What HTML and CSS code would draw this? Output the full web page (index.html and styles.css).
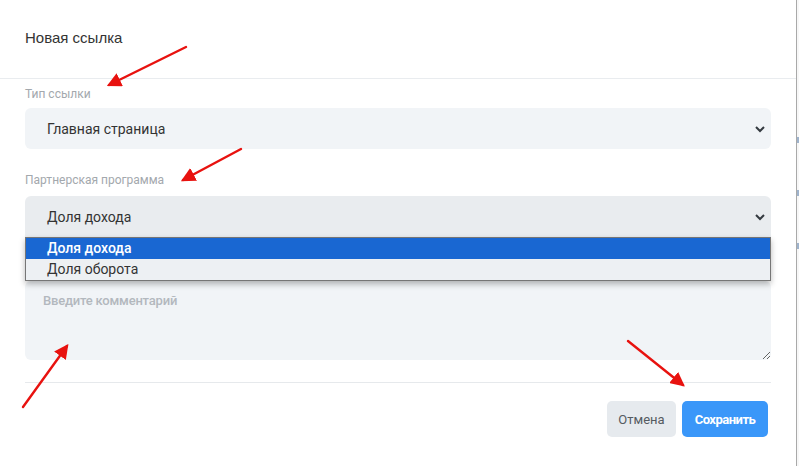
FILE: index.html
```html
<!DOCTYPE html>
<html lang="ru">
<head>
<meta charset="utf-8">
<title>Новая ссылка</title>
<link rel="stylesheet" href="styles.css">
</head>
<body>
<div class="modal">
  <div class="modal-header">Новая ссылка</div>
  <div class="modal-body">
    <div class="label">Тип ссылки</div>
    <div class="select">
      <span>Главная страница</span>
      <svg class="chev" width="10" height="7" viewBox="0 0 10 7"><polyline points="1,1 5,5 9,1" fill="none" stroke="#343a40" stroke-width="2"/></svg>
    </div>
    <div class="label label-2">Партнерская программа</div>
    <div class="select-wrap">
      <div class="select select-focus">
        <span>Доля дохода</span>
        <svg class="chev" width="10" height="7" viewBox="0 0 10 7"><polyline points="1,1 5,5 9,1" fill="none" stroke="#343a40" stroke-width="2"/></svg>
      </div>
      <div class="listbox">
        <div class="option option-active">Доля дохода</div>
        <div class="option">Доля оборота</div>
      </div>
    </div>
    <textarea class="comment" placeholder="Введите комментарий"></textarea>
    <div class="divider"></div>
    <div class="actions">
      <button class="btn btn-cancel">Отмена</button>
      <button class="btn btn-save">Сохранить</button>
    </div>
  </div>
  <svg class="arrows" width="799" height="466" viewBox="0 0 799 466">
    <defs>
      <marker id="ah" markerWidth="6" markerHeight="6" refX="5" refY="3" orient="auto" markerUnits="strokeWidth">
        <path d="M0,0 L6,3 L0,6 Z" fill="#e8120f"/>
      </marker>
    </defs>
    <g stroke="#e8120f" stroke-width="2.4" stroke-linecap="round" marker-end="url(#ah)">
      <line x1="186" y1="47" x2="109" y2="85"/>
      <line x1="241" y1="149" x2="183" y2="180"/>
      <line x1="23" y1="407" x2="67" y2="346"/>
      <line x1="628" y1="341" x2="683" y2="385"/>
    </g>
  </svg>
</div>
<div class="backdrop-edge">
  <span class="mark m1"></span>
  <span class="mark m2"></span>
  <span class="mark m3"></span>
</div>
</body>
</html>
```
FILE: styles.css
```css
html, body {
  margin: 0;
  padding: 0;
}
body {
  width: 799px;
  height: 466px;
  display: flex;
  background: #fbfbfb;
  font-family: Roboto, "Liberation Sans", Arial, sans-serif;
  overflow: hidden;
}
.modal {
  position: relative;
  width: 797px;
  height: 466px;
  background: #fff;
  border-right: 1px solid #a9a9a9;
  box-sizing: border-box;
  flex: none;
}
.backdrop-edge {
  position: relative;
  flex: 1;
  background: #f7f7f7;
}
.mark {
  position: absolute;
  left: 0;
  width: 2px;
  height: 6px;
  background: #9fb3cc;
}
.m1 { top: 137px; }
.m2 { top: 190px; }
.m3 { top: 243px; }
.modal-header {
  height: 79px;
  box-sizing: border-box;
  padding: 28px 25px 0;
  font-family: "Liberation Sans", Arial, sans-serif;
  font-size: 15px;
  line-height: 19px;
  color: #333;
  border-bottom: 1px solid #e9ecef;
}
.modal-body {
  padding: 0 25px 0 25px;
}
.label {
  margin-top: 8px;
  margin-bottom: 7px;
  font-size: 12px;
  line-height: 14px;
  color: #a3a8ad;
}
.label-2 {
  margin-top: 24px;
  margin-bottom: 9px;
}
.select {
  height: 41px;
  box-sizing: border-box;
  background: #f1f4f7;
  border-radius: 6px;
  padding: 0 6px 0 22px;
  display: flex;
  align-items: center;
  justify-content: space-between;
  font-size: 14px;
  color: #333;
}
.select-focus {
  background: #e9ecef;
  border-radius: 6px 6px 0 0;
}
.chev {
  display: block;
  margin-top: 1px;
}
.select-wrap {
  position: relative;
}
.listbox {
  position: absolute;
  left: 0;
  right: 0;
  top: 100%;
  z-index: 2;
  border: 1px solid #767676;
  background: #edf0f3;
  box-shadow: 0 3px 6px rgba(0, 0, 0, 0.28);
}
.option {
  height: 21px;
  line-height: 21px;
  padding-left: 21px;
  font-size: 14px;
  color: #333;
}
.option-active {
  background: #1967d2;
  color: #fff;
  font-weight: 500;
}
.comment {
  display: block;
  width: 100%;
  box-sizing: border-box;
  margin-top: 44px;
  height: 79px;
  border: none;
  border-radius: 6px;
  background: #f1f4f7;
  padding: 12px 18px;
  font-family: Roboto, "Liberation Sans", Arial, sans-serif;
  font-size: 13px;
  font-weight: 500;
  letter-spacing: -0.2px;
  color: #333;
  resize: vertical;
  outline: none;
}
.comment::placeholder {
  color: #b3b8be;
}
.divider {
  margin-top: 22px;
  border-top: 1px solid #e6e9ec;
}
.actions {
  display: flex;
  justify-content: flex-end;
  gap: 6px;
  padding: 18px 3px 0 0;
}
.btn {
  height: 36px;
  border: none;
  border-radius: 5px;
  font-family: Roboto, "Liberation Sans", Arial, sans-serif;
  font-size: 13px;
  padding: 0;
  cursor: pointer;
}
.btn-cancel {
  width: 69px;
  background: #e6eaee;
  color: #555b61;
}
.btn-save {
  width: 86px;
  background: #3a97f9;
  color: #fff;
  font-weight: 700;
  letter-spacing: -0.5px;
}
.arrows {
  position: absolute;
  left: 0;
  top: 0;
  pointer-events: none;
  z-index: 5;
}
```
